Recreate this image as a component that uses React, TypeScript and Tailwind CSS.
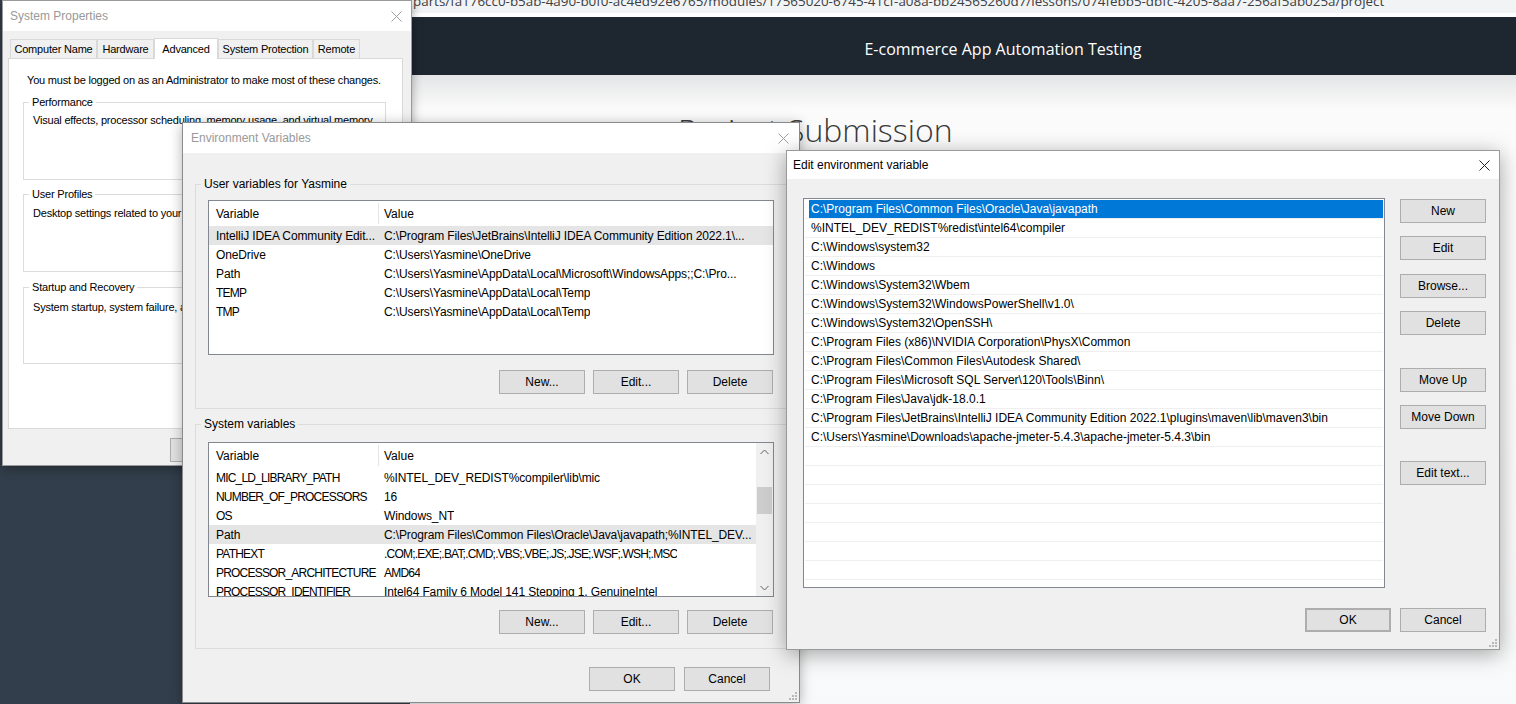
import React from 'react'

const winFont = "font-['Liberation_Sans',Arial,sans-serif] text-[12px] text-black"

const CloseX = ({ dim }: { dim?: boolean }) => (
    <svg width="11" height="11" viewBox="0 0 11 11" className={dim ? 'text-[#a0a0a0]' : 'text-[#222]'}>
        <path d="M0.5 0.5L10.5 10.5M10.5 0.5L0.5 10.5" stroke="currentColor" strokeWidth="1" fill="none" />
    </svg>
)

const Grip = () => (
    <svg width="9" height="9" viewBox="0 0 9 9" className="text-[#b8b8b8]">
        <rect x="7" y="1" width="2" height="2" fill="currentColor" />
        <rect x="4" y="4" width="2" height="2" fill="currentColor" />
        <rect x="7" y="4" width="2" height="2" fill="currentColor" />
        <rect x="1" y="7" width="2" height="2" fill="currentColor" />
        <rect x="4" y="7" width="2" height="2" fill="currentColor" />
        <rect x="7" y="7" width="2" height="2" fill="currentColor" />
    </svg>
)

const Btn = ({ label, className = '' }: { label: string; className?: string }) => (
    <div className={`h-[24px] flex items-center justify-center bg-[#e1e1e1] border border-[#adadad] shrink-0 whitespace-nowrap ${className}`}>
        {label}
    </div>
)

const Group = ({ label, className = '', children }: { label: string; className?: string; children?: React.ReactNode }) => (
    <fieldset className={`min-w-0 border border-[#dcdcdc] ${className}`}>
        <legend className="ml-[5px] px-[3px] leading-[16px]">{label}</legend>
        {children}
    </fieldset>
)

// Segoe UI capitals run narrower than Arial's, so caps-heavy cells are tightened
const isCaps = (s: string) => (s.match(/[A-Z_]/g) || []).length > s.length * 0.5

const Browser = () => (
    <div className="absolute left-[410px] top-0 right-0 bottom-0 flex flex-col bg-[#f8f9fa]">
        <div className="h-[13px] bg-[#f1f3f4] overflow-hidden">
            <div className="-mt-[9px] ml-[3px] whitespace-nowrap text-[13.4px] text-[#3c4043] font-['Open_Sans',sans-serif]">
                parts/fa176cc0-b5ab-4a90-b0f0-ac4ed92e6765/modules/17565020-6745-41cf-a08a-bb24565260d7/lessons/074febb5-dbfc-4205-8aa7-256af5ab025a/project
            </div>
        </div>
        <div className="h-[4px] bg-white" />
        <div className="h-[58px] bg-[#1e2630] flex items-center justify-center pl-[80px] pt-[6px] text-white text-[16px] font-['Open_Sans',sans-serif]">
            E-commerce App Automation Testing
        </div>
        <div className="flex-1 bg-[linear-gradient(to_bottom,#e4e5e6_0px,#fbfbfb_34px,#fcfcfc_300px,#f8f9fa_100%)]">
            <div className="pt-[39px] pl-[268px] text-[32px] leading-[32px] font-light text-[#3a3a3a] font-['Open_Sans',sans-serif]">
                Project Submission
            </div>
        </div>
    </div>
)

const tabs = [
    { label: 'Computer Name', w: 'w-[87px]' },
    { label: 'Hardware', w: 'w-[57px]' },
    { label: 'Advanced', w: 'w-[64px]', active: true },
    { label: 'System Protection', w: 'w-[95px]' },
    { label: 'Remote', w: 'w-[47px]' },
]

const SystemProperties = () => (
    <div className={`absolute left-[2px] top-0 w-[410px] h-[466px] flex flex-col bg-[#f0f0f0] border border-[#9a9a9a] shadow-[0_2px_10px_rgba(0,0,0,0.35)] ${winFont}`}>
        <div className="h-[30px] bg-white flex items-center justify-between pl-[7px] pr-[9px] text-[#999]">
            <span>System Properties</span>
            <CloseX dim />
        </div>
        <div className="pl-[5px] pt-[7px] text-[11px] tracking-[-0.2px]">
            <div className="flex items-end h-[20px] ml-[2px]">
                {tabs.map((t) =>
                    t.active ? (
                        <div key={t.label} className={`${t.w} h-[21px] -mb-[1px] relative z-10 bg-white border border-b-0 border-[#d9d9d9] flex items-center justify-center whitespace-nowrap`}>
                            {t.label}
                        </div>
                    ) : (
                        <div key={t.label} className={`${t.w} h-[19px] bg-[#f0f0f0] border border-b-0 border-[#d9d9d9] flex items-center justify-center whitespace-nowrap`}>
                            {t.label}
                        </div>
                    )
                )}
            </div>
            <div className="w-[395px] h-[371px] bg-white border border-[#d9d9d9] flex flex-col">
                <div className="mt-[13px] ml-[18px] leading-[16px] whitespace-nowrap">
                    You must be logged on as an Administrator to make most of these changes.
                </div>
                <Group label="Performance" className="ml-[14px] mt-[6px] w-[363px] h-[86px]">
                    <div className="mt-[2px] ml-[9px] leading-[16px] whitespace-nowrap">
                        Visual effects, processor scheduling, memory usage, and virtual memory
                    </div>
                </Group>
                <Group label="User Profiles" className="ml-[14px] mt-[6px] w-[363px] h-[86px]">
                    <div className="mt-[3px] ml-[9px] leading-[16px] whitespace-nowrap">Desktop settings related to your sign-in</div>
                </Group>
                <Group label="Startup and Recovery" className="ml-[14px] mt-[7px] w-[363px] h-[85px]">
                    <div className="mt-[4px] ml-[9px] leading-[16px] whitespace-nowrap">
                        System startup, system failure, and debugging information
                    </div>
                </Group>
            </div>
        </div>
        <div className="flex gap-[8px] pl-[167px] mt-[9px] text-[11px]">
            <Btn label="OK" className="w-[75px] h-[22px]" />
            <Btn label="Cancel" className="w-[75px] h-[22px]" />
            <Btn label="Apply" className="w-[75px] h-[22px]" />
        </div>
    </div>
)

type Row = [string, string]

const userVars: Row[] = [
    ['IntelliJ IDEA Community Edit...', 'C:\\Program Files\\JetBrains\\IntelliJ IDEA Community Edition 2022.1\\...'],
    ['OneDrive', 'C:\\Users\\Yasmine\\OneDrive'],
    ['Path', 'C:\\Users\\Yasmine\\AppData\\Local\\Microsoft\\WindowsApps;;C:\\Pro...'],
    ['TEMP', 'C:\\Users\\Yasmine\\AppData\\Local\\Temp'],
    ['TMP', 'C:\\Users\\Yasmine\\AppData\\Local\\Temp'],
]

const systemVars: Row[] = [
    ['MIC_LD_LIBRARY_PATH', '%INTEL_DEV_REDIST%compiler\\lib\\mic'],
    ['NUMBER_OF_PROCESSORS', '16'],
    ['OS', 'Windows_NT'],
    ['Path', 'C:\\Program Files\\Common Files\\Oracle\\Java\\javapath;%INTEL_DEV...'],
    ['PATHEXT', '.COM;.EXE;.BAT;.CMD;.VBS;.VBE;.JS;.JSE;.WSF;.WSH;.MSC'],
    ['PROCESSOR_ARCHITECTURE', 'AMD64'],
    ['PROCESSOR_IDENTIFIER', 'Intel64 Family 6 Model 141 Stepping 1, GenuineIntel'],
]

const Scrollbar = () => (
    <div className="w-[17px] bg-[#f0f0f0] flex flex-col items-center text-[#606060]">
        <div className="h-[17px] flex items-center justify-center">
            <svg width="9" height="6" viewBox="0 0 9 6"><path d="M0.5 5L4.5 1L8.5 5" stroke="currentColor" fill="none" /></svg>
        </div>
        <div className="mt-[27px] w-[15px] h-[27px] bg-[#cdcdcd]" />
        <div className="flex-1" />
        <div className="h-[17px] flex items-center justify-center">
            <svg width="9" height="6" viewBox="0 0 9 6"><path d="M0.5 1L4.5 5L8.5 1" stroke="currentColor" fill="none" /></svg>
        </div>
    </div>
)

const Cell = ({ text, className }: { text: string; className: string }) => (
    <div className={`${className} overflow-hidden ${isCaps(text) ? 'tracking-[-0.8px]' : 'tracking-[-0.12px]'}`}>{text}</div>
)

const VarList = ({ rows, selected, scroll }: { rows: Row[]; selected: number; scroll?: boolean }) => (
    <div className="h-[155px] bg-white border border-[#828790] overflow-hidden flex">
        <div className="flex-1 min-w-0 flex flex-col">
            <div className="h-[25px] shrink-0 flex items-center">
                <div className="w-[169px] pl-[7px]">Variable</div>
                <div className="w-px h-[21px] bg-[#e5e5e5]" />
                <div className="pl-[5px]">Value</div>
            </div>
            {rows.map((r, i) => (
                <div key={r[0]} className={`h-[19px] shrink-0 flex items-center whitespace-nowrap ${i === selected ? 'bg-[#e5e5e5]' : ''}`}>
                    <Cell text={r[0]} className="w-[170px] shrink-0 pl-[7px]" />
                    <Cell text={r[1]} className="min-w-0 pl-[5px]" />
                </div>
            ))}
        </div>
        {scroll && <Scrollbar />}
    </div>
)

const EnvVars = () => (
    <div className={`absolute left-[182px] top-[122px] w-[618px] h-[581px] flex flex-col bg-[#f0f0f0] border border-[#8a8a8a] shadow-[0_2px_12px_rgba(0,0,0,0.3)] ${winFont}`}>
        <div className="h-[30px] shrink-0 bg-white flex items-center justify-between pl-[8px] pr-[10px] text-[#999]">
            <span>Environment Variables</span>
            <CloseX dim />
        </div>
        <div className="pl-[12px]">
            <Group label="User variables for Yasmine" className="mt-[23px] w-[592px]">
                <div className="px-[12px] pt-[8px] pb-[14px]">
                    <VarList rows={userVars} selected={0} />
                    <div className="flex justify-end gap-[8px] mt-[15px] pr-[1px]">
                        <Btn label="New..." className="w-[86px]" />
                        <Btn label="Edit..." className="w-[86px]" />
                        <Btn label="Delete" className="w-[86px]" />
                    </div>
                </div>
            </Group>
            <Group label="System variables" className="mt-[7px] w-[592px]">
                <div className="px-[12px] pt-[10px] pb-[14px]">
                    <VarList rows={systemVars} selected={3} scroll />
                    <div className="flex justify-end gap-[8px] mt-[13px] pr-[1px]">
                        <Btn label="New..." className="w-[86px]" />
                        <Btn label="Edit..." className="w-[86px]" />
                        <Btn label="Delete" className="w-[86px]" />
                    </div>
                </div>
            </Group>
        </div>
        <div className="flex justify-end gap-[9px] mt-[18px] pr-[29px]">
            <Btn label="OK" className="w-[86px]" />
            <Btn label="Cancel" className="w-[86px]" />
        </div>
        <div className="absolute right-[2px] bottom-[2px]">
            <Grip />
        </div>
    </div>
)

const paths = [
    'C:\\Program Files\\Common Files\\Oracle\\Java\\javapath',
    '%INTEL_DEV_REDIST%redist\\intel64\\compiler',
    'C:\\Windows\\system32',
    'C:\\Windows',
    'C:\\Windows\\System32\\Wbem',
    'C:\\Windows\\System32\\WindowsPowerShell\\v1.0\\',
    'C:\\Windows\\System32\\OpenSSH\\',
    'C:\\Program Files (x86)\\NVIDIA Corporation\\PhysX\\Common',
    'C:\\Program Files\\Common Files\\Autodesk Shared\\',
    'C:\\Program Files\\Microsoft SQL Server\\120\\Tools\\Binn\\',
    'C:\\Program Files\\Java\\jdk-18.0.1',
    'C:\\Program Files\\JetBrains\\IntelliJ IDEA Community Edition 2022.1\\plugins\\maven\\lib\\maven3\\bin',
    'C:\\Users\\Yasmine\\Downloads\\apache-jmeter-5.4.3\\apache-jmeter-5.4.3\\bin',
    '', '', '', '', '', '', '', '', '',
]

const EditEnv = () => (
    <div className={`absolute left-[786px] top-[150px] w-[714px] h-[500px] flex flex-col bg-[#f0f0f0] border border-[#9a9a9a] shadow-[0_4px_20px_rgba(0,0,0,0.35)] ${winFont}`}>
        <div className="h-[28px] shrink-0 bg-white flex items-center justify-between pl-[6px] pr-[9px]">
            <span>Edit environment variable</span>
            <CloseX />
        </div>
        <div className="flex pl-[16px] mt-[19px]">
            <div className="w-[582px] h-[390px] bg-white border border-[#828790] overflow-hidden pt-[1px]">
                {paths.map((p, i) => (
                    <div key={i} className="h-[19px] mx-[1px] border-b border-[#efefef]">
                        <div className={`h-full ml-[4px] pl-[2px] flex items-center whitespace-nowrap ${i === 0 ? 'bg-[#0078d7] text-white' : ''}`}>{p}</div>
                    </div>
                ))}
            </div>
            <div className="ml-[15px] mt-[1px] flex flex-col">
                <Btn label="New" className="w-[86px]" />
                <Btn label="Edit" className="w-[86px] mt-[13px]" />
                <Btn label="Browse..." className="w-[86px] mt-[14px]" />
                <Btn label="Delete" className="w-[86px] mt-[13px]" />
                <Btn label="Move Up" className="w-[86px] mt-[33px]" />
                <Btn label="Move Down" className="w-[86px] mt-[13px]" />
                <Btn label="Edit text..." className="w-[86px] mt-[32px]" />
            </div>
        </div>
        <div className="flex justify-end gap-[9px] mt-[20px] pr-[13px]">
            <Btn label="OK" className="w-[86px] border-2 border-[#0078d7]" />
            <Btn label="Cancel" className="w-[86px]" />
        </div>
        <div className="absolute right-[2px] bottom-[2px]">
            <Grip />
        </div>
    </div>
)

export default function App() {
    return (
        <div className="relative w-[1516px] h-[704px] overflow-hidden bg-[#323e4b]">
            <Browser />
            <SystemProperties />
            <EnvVars />
            <EditEnv />
        </div>
    )
}
